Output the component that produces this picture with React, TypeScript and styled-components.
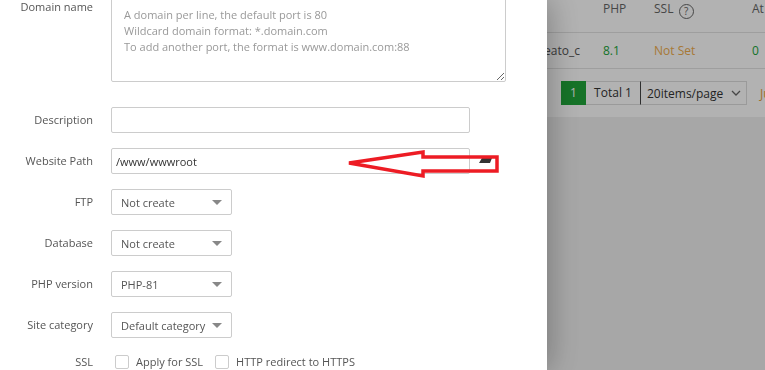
import * as React from 'react'
import styled, { createGlobalStyle } from 'styled-components'

const GlobalStyle = createGlobalStyle`
  html, body {
    margin: 0;
    padding: 0;
    overflow: hidden;
    background: #f0f0f0;
    font-family: "Open Sans", "Noto Sans", sans-serif;
    font-size: 11px;
  }
`

const selects = [
  { label: 'FTP', value: 'Not create' },
  { label: 'Database', value: 'Not create' },
  { label: 'PHP version', value: 'PHP-81' },
  { label: 'Site category', value: 'Default category' }
]

const placeholder =
  'A domain per line, the default port is 80\nWildcard domain format: *.domain.com\nTo add another port, the format is www.domain.com:88'

export default () => (
  <>
    <GlobalStyle />
    <Backdrop>
      <TableCard>
        <HeadRow>
          <Cell />
          <Cell>PHP</Cell>
          <Cell>
            SSL <Help>?</Help>
          </Cell>
          <Cell>At</Cell>
        </HeadRow>
        <DataRow>
          <NameCell>wp_createato_c</NameCell>
          <Cell color="#20a53a">8.1</Cell>
          <Cell color="#f0ad4e">Not Set</Cell>
          <Cell color="#20a53a">0</Cell>
        </DataRow>
        <Pager>
          <PageCurrent>1</PageCurrent>
          <PageTotal>Total 1</PageTotal>
          <PageSize>
            20items/page
            <svg width="10" height="6" viewBox="0 0 10 6">
              <path d="M1 1l4 4 4-4" fill="none" stroke="#666" strokeWidth="1.3" />
            </svg>
          </PageSize>
          <PageJump>Jump</PageJump>
        </Pager>
      </TableCard>
    </Backdrop>
    <Overlay />
    <Drawer>
      <Form>
        <Row $top $gap={25}>
          <Label $pad={5}>Domain name</Label>
          <Textarea placeholder={placeholder} />
        </Row>
        <Row>
          <Label>Description</Label>
          <Input />
        </Row>
        <Row>
          <Label>Website Path</Label>
          <Input defaultValue="/www/wwwroot" />
          <FolderIcon width="14" height="8" viewBox="0 0 14 8">
            <polygon points="3,1 13,1 11,6 0,6" fill="#333" />
          </FolderIcon>
        </Row>
        {selects.map(item => (
          <Row key={item.label}>
            <Label>{item.label}</Label>
            <Select>
              {item.value}
              <Caret />
            </Select>
          </Row>
        ))}
        <Row $small>
          <Label>SSL</Label>
          <Check>
            <Box />
            Apply for SSL
          </Check>
          <Check>
            <Box />
            HTTP redirect to HTTPS
          </Check>
        </Row>
      </Form>
      <Annotation width="547" height="370" viewBox="0 0 547 370">
        <polygon
          points="349,163 423,152 423,157 497,157 497,171 423,171 423,176"
          fill="none"
          stroke="#ed1c24"
          strokeWidth="3.5"
          strokeLinejoin="miter"
        />
      </Annotation>
    </Drawer>
  </>
)

const Backdrop = styled.div`
  min-height: 100vh;
  background: #f0f0f0;
`

const TableCard = styled.div`
  background: #fff;
  color: #666;
`

const HeadRow = styled.div`
  display: grid;
  grid-template-columns: 593px 51px 98px 1fr;
  height: 32px;
  border-bottom: 1px solid #e2e2e2;
  line-height: 18px;
  font-size: 12px;
`

const DataRow = styled(HeadRow)`
  height: 35px;
  align-items: center;
`

const Cell = styled.div<{ color?: string }>`
  padding-left: 10px;
  white-space: nowrap;
  color: ${p => p.color || '#666'};
`

const NameCell = styled.div`
  text-align: right;
  padding-right: 13px;
  color: #555;
`

const Help = styled.span`
  display: inline-flex;
  align-items: center;
  justify-content: center;
  width: 13px;
  height: 13px;
  margin-left: 2px;
  border: 1px solid #666;
  border-radius: 50%;
  font-size: 10px;
  line-height: 1;
  vertical-align: -2px;
`

const Pager = styled.div`
  display: flex;
  align-items: center;
  height: 48px;
  padding: 0 0 0 561px;
  font-size: 12px;
  color: #333;
  & > * {
    flex-shrink: 0;
  }
`

const PageCurrent = styled.div`
  width: 25px;
  height: 24px;
  line-height: 24px;
  text-align: center;
  background: #20a53a;
  color: #fff;
`

const PageTotal = styled.div`
  width: 55px;
  height: 24px;
  line-height: 22px;
  box-sizing: border-box;
  text-align: center;
  border: 1px solid #ddd;
  border-left: none;
  border-right: 1px solid #444;
`

const PageSize = styled.div`
  display: flex;
  align-items: center;
  justify-content: space-between;
  width: 106px;
  height: 24px;
  padding: 0 5px 0 6px;
  border: 1px solid #ddd;
  border-left: none;
  box-sizing: border-box;
`

const PageJump = styled.div`
  margin-left: 13px;
  color: #e6a23c;
`

const Overlay = styled.div`
  position: fixed;
  inset: 0;
  background: rgba(0, 0, 0, 0.3);
`

const Drawer = styled.div`
  position: fixed;
  top: 0;
  left: 0;
  bottom: 0;
  width: 547px;
  background: #fff;
  box-shadow: 2px 0 30px rgba(0, 0, 0, 0.3);
  overflow: hidden;
`

const Form = styled.div`
  margin-top: -6px;
`

const Row = styled.div<{ $top?: boolean; $gap?: number; $small?: boolean }>`
  display: flex;
  align-items: ${p => (p.$top ? 'flex-start' : 'center')};
  min-height: ${p => (p.$small ? 17 : 26)}px;
  margin-bottom: ${p => p.$gap ?? 15}px;
`

const Label = styled.div<{ $pad?: number }>`
  flex-shrink: 0;
  width: 93px;
  padding: ${p => p.$pad ?? 0}px 18px 0 0;
  text-align: right;
  line-height: 16px;
  color: #555;
`

const Textarea = styled.textarea`
  width: 395px;
  height: 88px;
  box-sizing: border-box;
  padding: 12px 12px;
  border: 1px solid #ccc;
  border-radius: 2px;
  font-family: inherit;
  font-size: 11px;
  line-height: 16px;
  color: #333;
  outline: none;
  &::placeholder {
    color: #999;
  }
`

const Input = styled.input`
  width: 359px;
  height: 26px;
  box-sizing: border-box;
  padding: 0 4px;
  border: 1px solid #ccc;
  border-radius: 2px;
  font-family: inherit;
  font-size: 11px;
  color: #333;
  outline: none;
`

const FolderIcon = styled.svg`
  margin-left: 9px;
`

const Select = styled.div`
  display: flex;
  align-items: center;
  justify-content: space-between;
  width: 121px;
  height: 26px;
  box-sizing: border-box;
  padding: 0 9px 0 9px;
  border: 1px solid #ccc;
  border-radius: 2px;
  color: #555;
`

const Caret = styled.span`
  width: 0;
  height: 0;
  border-left: 5px solid transparent;
  border-right: 5px solid transparent;
  border-top: 5px solid #888;
`

const Check = styled.label`
  display: flex;
  align-items: center;
  margin-right: 12px;
  color: #555;
  &:first-of-type {
    margin-left: 4px;
  }
`

const Box = styled.span`
  width: 14px;
  height: 14px;
  box-sizing: border-box;
  margin-right: 7px;
  border: 1px solid #ccc;
  border-radius: 2px;
  background: #fff;
`

const Annotation = styled.svg`
  position: absolute;
  top: 0;
  left: 0;
  pointer-events: none;
`
